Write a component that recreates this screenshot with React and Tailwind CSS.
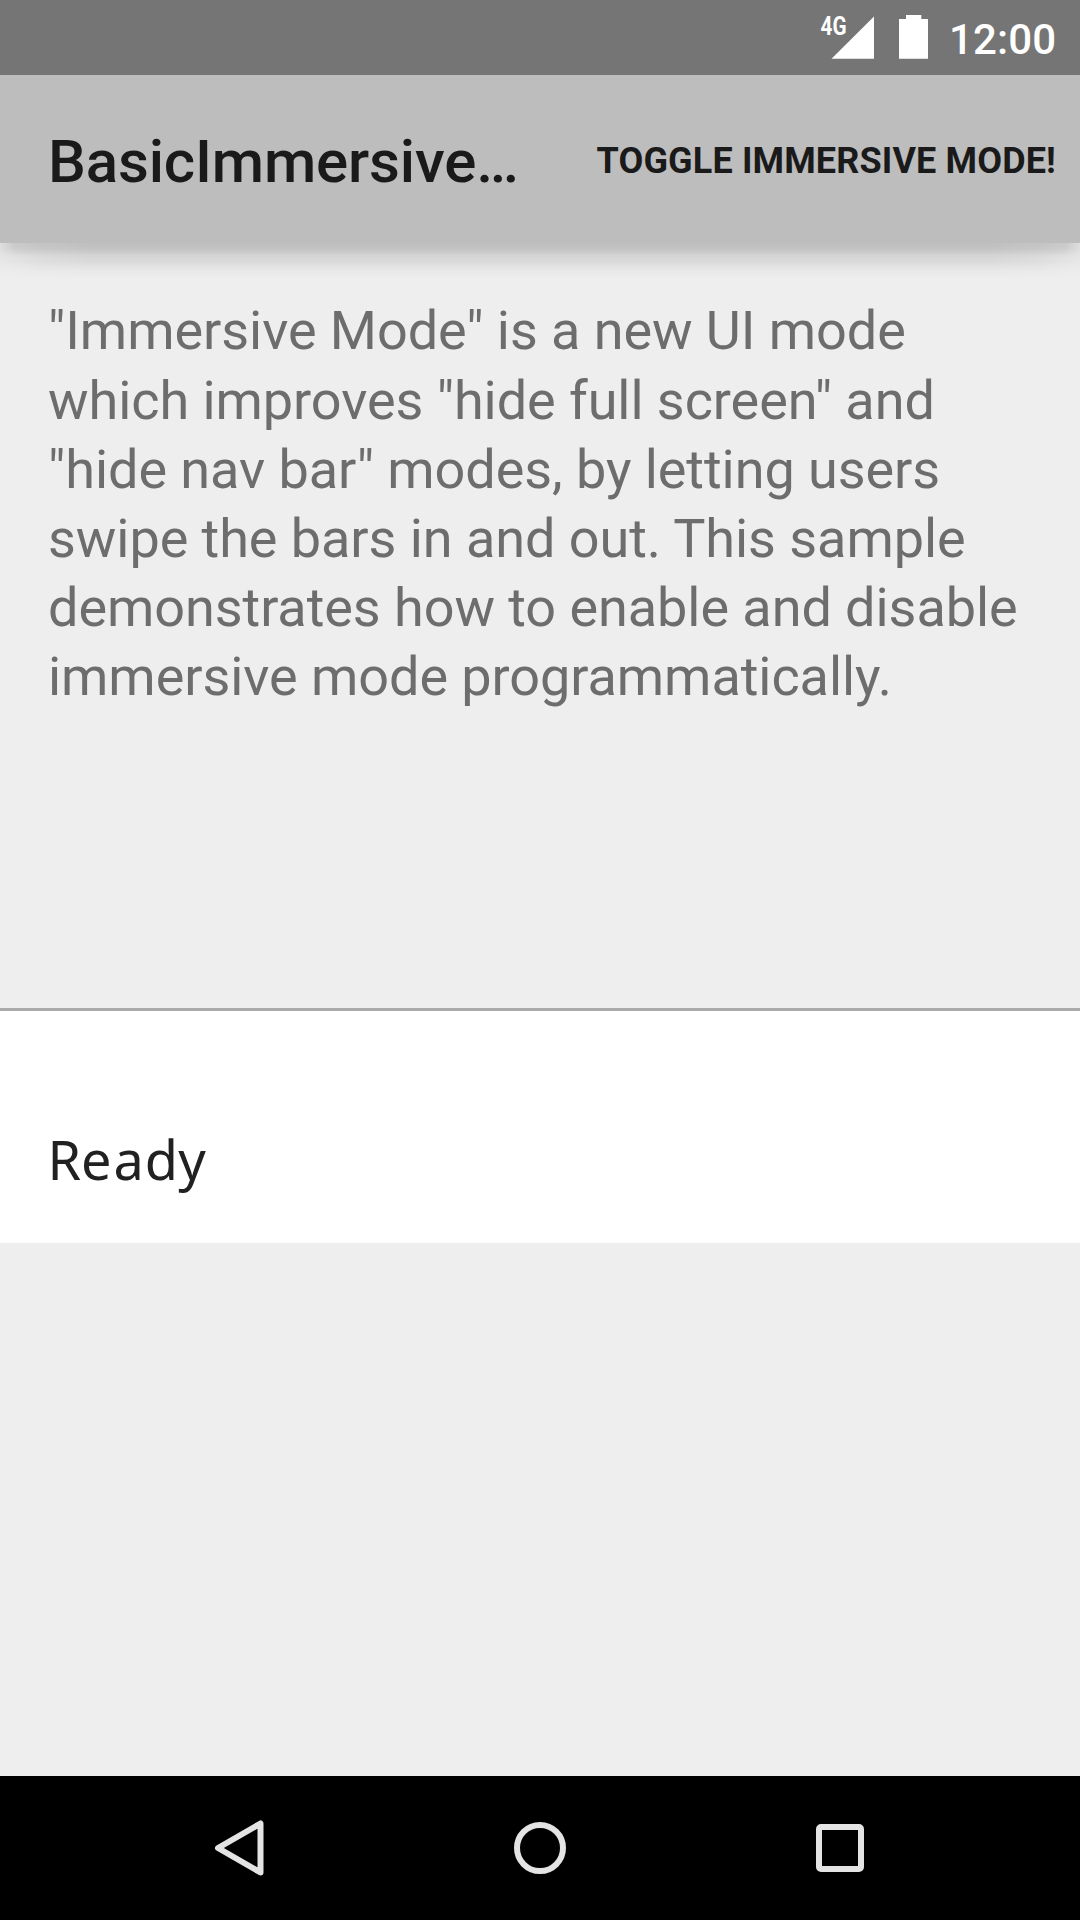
const description =
  '"Immersive Mode" is a new UI mode which improves "hide full screen" and "hide nav bar" modes, by letting users swipe the bars in and out. This sample demonstrates how to enable and disable immersive mode programmatically.';

function StatusBar() {
  return (
    <div className="flex h-[75px] shrink-0 bg-[#757575] text-white">
      <svg width="280" height="75" viewBox="0 0 280 75" className="ml-auto" fill="#fff" aria-hidden="true">
        <text x="20.5" y="35.3" fontSize="25" fontWeight="700" fontFamily="Roboto, sans-serif" textLength="26" lengthAdjust="spacingAndGlyphs">4G</text>
        <path d="M74 16.5V58.8H31.5Z" />
        <path d="M106 15H121.300V19H128V58.800H99V19H106Z" />
        <text x="149" y="54" fontSize="42" fontWeight="500" fontFamily="Roboto, sans-serif" textLength="107" lengthAdjust="spacing">12:00</text>
      </svg>
    </div>
  );
}

function ActionBar() {
  return (
    <header className="relative z-10 flex h-[168px] shrink-0 items-center justify-between bg-[#bdbdbd] pr-6 pl-12 text-[#1a1a1a]">
      <h1 className="pt-[5px] text-[60px] leading-[70px] font-medium tracking-[-0.15px] whitespace-nowrap">BasicImmersive…</h1>
      <button className="pt-1 text-[36px] leading-[42px] font-bold tracking-[0.14px] whitespace-nowrap">TOGGLE IMMERSIVE MODE!</button>
      {/* Elevation shadow: a tight ambient layer and a wider one that fades towards the corners */}
      <div className="pointer-events-none absolute inset-x-0 top-full h-4 bg-[linear-gradient(to_bottom,rgba(0,0,0,0.12)_0px,rgba(0,0,0,0.09)_6px,rgba(0,0,0,0.02)_12px,rgba(0,0,0,0)_16px)] [mask-image:linear-gradient(to_right,rgba(0,0,0,0.3)_0px,black_14px,black_1066px,rgba(0,0,0,0.3)_1080px)]" />
      <div className="pointer-events-none absolute inset-x-0 top-full h-9 bg-[linear-gradient(to_bottom,rgba(0,0,0,0.085)_0px,rgba(0,0,0,0.095)_10px,rgba(0,0,0,0.09)_18px,rgba(0,0,0,0.035)_25px,rgba(0,0,0,0.01)_31px,rgba(0,0,0,0)_36px)] [mask-image:linear-gradient(to_right,rgba(0,0,0,0.3)_0px,rgba(0,0,0,0.75)_40px,black_90px,black_990px,rgba(0,0,0,0.75)_1040px,rgba(0,0,0,0.3)_1080px)]" />
    </header>
  );
}

function NavigationBar() {
  return (
    <nav className="flex h-36 shrink-0 items-center justify-center bg-black">
      <svg width="660" height="144" viewBox="210 0 660 144" fill="none" stroke="#e4e4e4" strokeWidth="6" strokeLinejoin="round" aria-hidden="true">
        <path d="M218 72L260.500 47.500V96.500Z" />
        <circle cx="540" cy="72" r="23" />
        <rect x="819" y="51" width="42" height="42" rx="2" />
      </svg>
    </nav>
  );
}

export default function App() {
  return (
    <div className="flex h-[1920px] w-[1080px] flex-col overflow-hidden bg-[#eeeeee] font-['Roboto',sans-serif]">
      <StatusBar />
      <ActionBar />
      <main className="flex min-h-0 flex-1 flex-col">
        <section className="h-[765px] shrink-0 px-12 pt-[53.3px]">
          <p className="text-[54px] leading-[69.2px] tracking-[-0.06px] text-[#6d6d6d]">{description}</p>
        </section>
        <section className="h-[235px] shrink-0 border-t-[3px] border-[#aaaaaa] bg-white px-12 pt-[111px]">
          <p className="-ml-[0.4px] font-['Noto_Sans',sans-serif] text-[54px] leading-[74px] text-[#212121]">
            <span className="tracking-[-0.2px]">R</span>
            <span className="tracking-[2px]">e</span>
            <span className="tracking-[1px]">a</span>
            <span className="tracking-[0.3px]">d</span>
            <span>y</span>
          </p>
        </section>
      </main>
      <NavigationBar />
    </div>
  );
}
